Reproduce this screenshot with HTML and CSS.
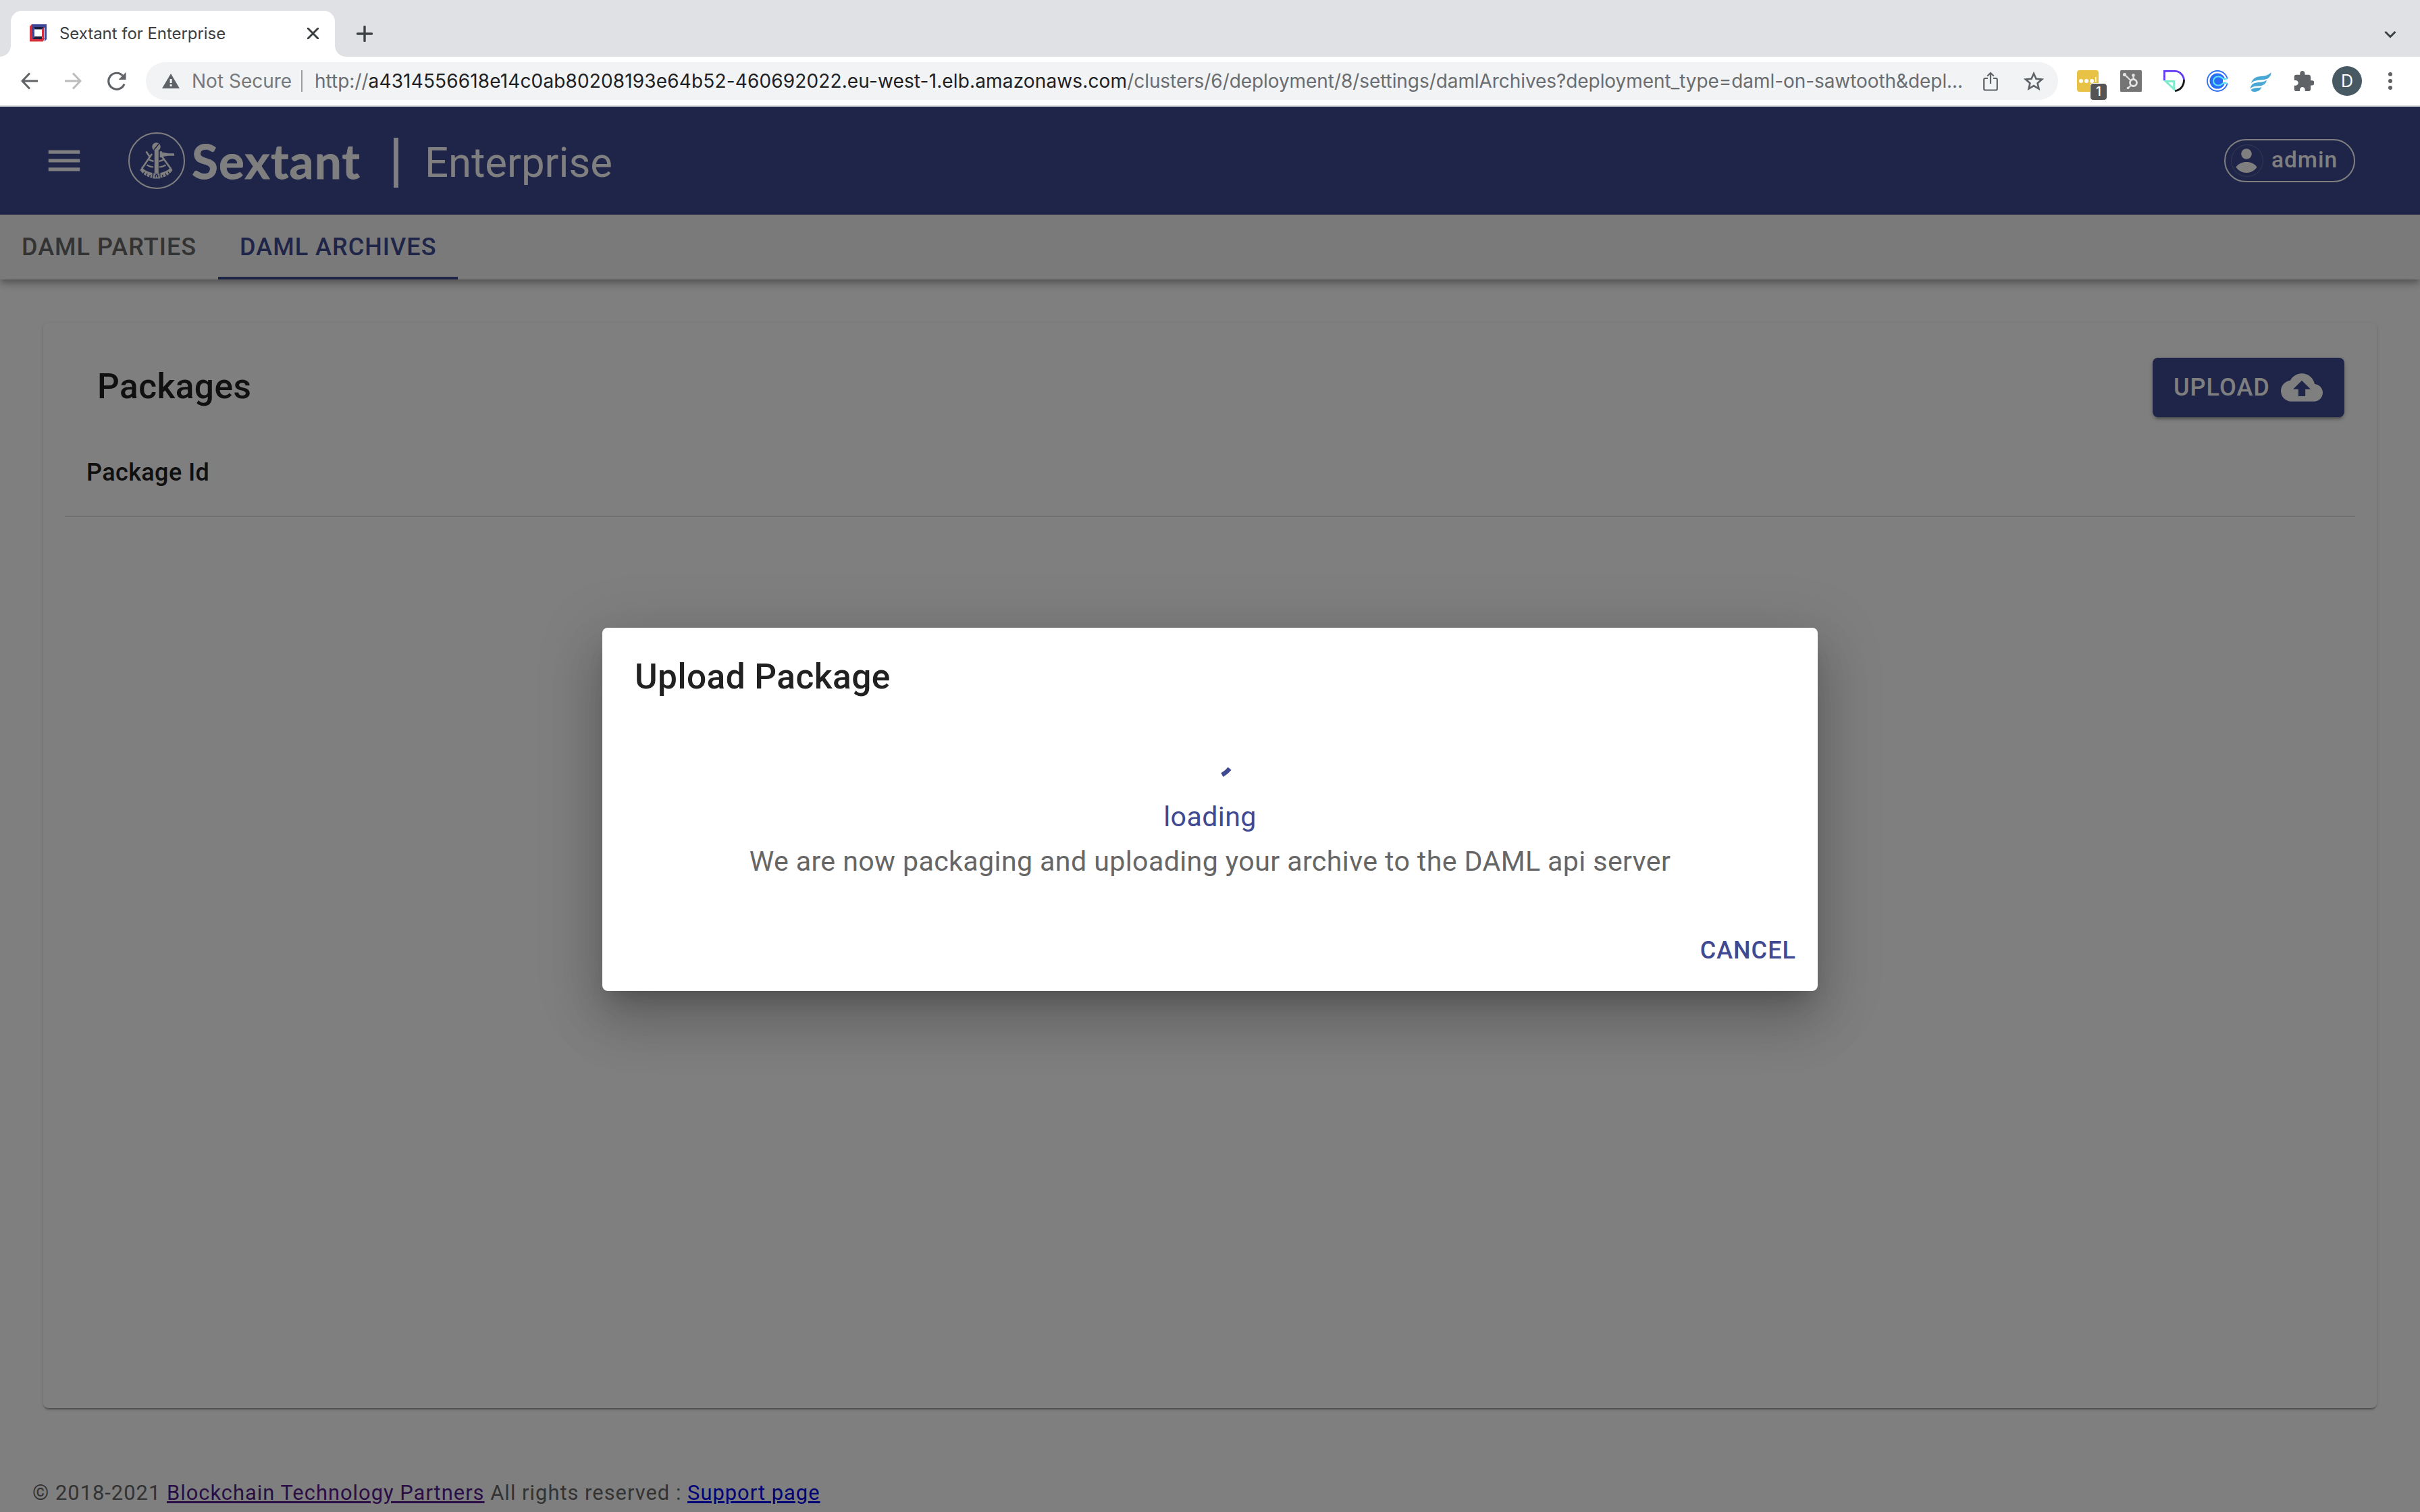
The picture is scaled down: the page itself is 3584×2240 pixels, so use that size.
FILE: index.html
```
<!DOCTYPE html>
<html lang="en">
<head>
<meta charset="utf-8">
<title>Sextant for Enterprise</title>
<link rel="stylesheet" href="styles.css">
</head>
<body>
<div class="browser">
  <div class="tabstrip">
    <div class="tab">
      <svg class="favicon" viewBox="0 0 26 26"><path fill="#d5303e" d="M0 3 3 0h6v20h13l-2 5.500H0z"/><path fill="#3d4795" d="M3 0h22v22l-3 3.500V5H9v12H3z"/><path fill="#1b1f3f" d="M6 4h15l-3 4H9zM4 22l4-4h10v4z"/><path fill="#fff" d="M7 7.500h11v10.500H7z"/><path fill="#d5303e" d="M18 8l3-4v18l-3-3z"/><path fill="#3d4795" d="M4 4l3 3v11l-3 4z"/></svg>
      <span class="tab-title">Sextant for Enterprise</span>
      <svg class="tab-close" viewBox="0 0 16 16"><path d="M1 1l14 14M15 1 1 15" stroke="#3c4043" stroke-width="2.800" stroke-linecap="round"/></svg>
    </div>
    <svg class="new-tab" viewBox="0 0 24 24"><path d="M12 1.500v21M1.500 12h21" stroke="#3c4043" stroke-width="3.400" stroke-linecap="round"/></svg>
    <svg class="tab-search" viewBox="0 0 18 12"><path d="M1.500 2 9 9.500 16.500 2" fill="none" stroke="#3c4043" stroke-width="3"/></svg>
  </div>
  <div class="toolbar">
    <svg class="nav-icon" viewBox="0 0 26 26"><path d="M25 13H2M13 1.500 2 13l11 11.500" fill="none" stroke="#5f6368" stroke-width="3"/></svg>
    <svg class="nav-icon" viewBox="0 0 26 26"><path d="M1 13h23M13 1.500 24 13 13 24.500" fill="none" stroke="#babcbe" stroke-width="3"/></svg>
    <svg class="nav-icon reload" viewBox="0 0 28 28"><path d="M25 18.500A12 12 0 1 1 22.500 6" fill="none" stroke="#5f6368" stroke-width="3.200"/><path d="M27.500 1v11h-11z" fill="#5f6368"/></svg>
    <div class="omnibox">
      <svg class="warn" viewBox="0 0 26 22"><path d="M13 0l13 22H0z" fill="#5f6368"/><path d="M11.600 8h3v6h-3zM11.600 16h3v3h-3z" fill="#f1f3f4"/></svg>
      <span class="not-secure">Not Secure</span>
      <span class="omni-sep"></span>
      <span class="url"><span class="u-scheme">http://</span><span class="u-host">a4314556618e14c0ab80208193e64b52-460692022.eu-west-1.elb.amazonaws.com</span><span class="u-path">/clusters/6/deployment/8/settings/damlArchives?deployment_type=daml-on-sawtooth&amp;depl...</span></span>
      <svg class="share" viewBox="0 0 22 29"><path d="M7 10H3.200Q1.200 10 1.200 12v13.500q0 2 2 2h15.600q2 0 2-2V12q0-2-2-2H15M11 18V2.500M6.200 6.800 11 2l4.800 4.800" fill="none" stroke="#5f6368" stroke-width="2.200"/></svg>
      <svg class="star" viewBox="0 0 30 28"><path d="M15 3l3.500 7.800 8.500.8-6.400 5.600 1.900 8.300-7.500-4.400-7.500 4.400 1.900-8.300L3 11.600l8.500-.8z" fill="none" stroke="#5f6368" stroke-width="2.600"/></svg>
    </div>
    <div class="extensions">
      <span class="ext ext-note"><svg viewBox="0 0 32 32"><rect width="32" height="32" rx="4" fill="#e8c244"/><g fill="#fff"><circle cx="6" cy="16" r="3"/><circle cx="14" cy="16" r="3"/><circle cx="22" cy="16" r="3"/><path d="M27 10h1.500v8H27z"/></g></svg><span class="ext-badge">1</span></span>
      <svg class="ext" viewBox="0 0 32 32"><rect width="32" height="32" rx="1.500" fill="#757575"/><g fill="none" stroke="#e4e4e4" stroke-width="2.200"><circle cx="19.500" cy="18.500" r="5" stroke-width="2.800"/><path d="M19.500 13V8M15.500 15 7 7M16 22.500 11.500 26.500"/></g><g fill="#e4e4e4"><circle cx="6.500" cy="6.500" r="2.600"/><circle cx="19.500" cy="7.500" r="2.300"/><circle cx="11.500" cy="26.500" r="1.800"/></g></svg>
      <svg class="ext" viewBox="0 0 32 32"><path d="M1.400 15V1.400h16A14 14 0 0 1 30.500 15" fill="none" stroke="#633bf5" stroke-width="2.900"/><path d="M30.500 14.500c0 9-6 15.500-13.500 16" fill="none" stroke="#191919" stroke-width="2.900"/><path d="M3.500 16.500h12.200V28z" fill="none" stroke="#7ceccb" stroke-width="3"/></svg>
      <svg class="ext" viewBox="0 0 32 32"><circle cx="16" cy="16" r="15" fill="none" stroke="#2a6df5" stroke-width="1.800"/><circle cx="16" cy="16" r="11.500" fill="#2a6df5"/><path d="M24 12.800h8v6.400h-8z" fill="#fff"/><path d="M30.500 12c-3 1.500-5 1.500-7 0-2-2-4-3-7-2.500a6.500 6.500 0 0 0 0 13c3 .5 5-.5 7-2.500 2-1.500 4-1.500 7 0" fill="none" stroke="#5fe0f5" stroke-width="2.200"/></svg>
      <svg class="ext" viewBox="0 0 32 32"><g fill="#49a7d6"><path d="M31.500 3c0 7-5 11-13 11.200C11 14.500 6 15.500 2 19 4 12 9 9.500 17 9 24 8.500 28 7 31.500 3z"/><path d="M25 14.500c-1 6-5 8.500-12 9-6 .2-9 .8-12.500 4C2 20 6 18.500 13 18c6-.5 9-1 12-3.500z"/><path d="M17.500 25c-2 5-6 7-11 7-3 0-4.500-1.500-5-3 3-2.500 6-2.800 10-3 2.500 0 4.500-.3 6-1z"/></g></svg>
      <svg class="ext puzzle" viewBox="1.500 1 21 21"><path fill="#5f6368" d="M20.500 11H19V7c0-1.100-.9-2-2-2h-4V3.500C13 2.120 11.880 1 10.500 1S8 2.120 8 3.500V5H4c-1.100 0-1.990.9-1.990 2v3.800H3.500c1.490 0 2.700 1.210 2.700 2.700s-1.210 2.700-2.700 2.700H2V20c0 1.100.9 2 2 2h3.800v-1.500c0-1.490 1.210-2.700 2.700-2.700s2.700 1.210 2.700 2.700V22H17c1.100 0 2-.9 2-2v-4h1.500c1.380 0 2.500-1.120 2.500-2.500S21.880 11 20.500 11z"/></svg>
      <span class="profile">D</span>
      <svg class="dots" viewBox="0 0 6 26"><g fill="#5f6368"><circle cx="3" cy="3" r="3"/><circle cx="3" cy="13" r="3"/><circle cx="3" cy="23" r="3"/></g></svg>
    </div>
  </div>
</div>

<div class="app">
  <header class="appbar">
    <svg class="menu" viewBox="0 0 24 24"><path fill="#fff" d="M3 18h18v-2H3v2zm0-5h18v-2H3v2zm0-7v2h18V6H3z"/></svg>
    <svg class="logo" viewBox="0 0 84 84">
      <circle cx="42" cy="42" r="41" fill="none" stroke="#fff" stroke-width="2"/>
      <g fill="#fff"><circle cx="41.500" cy="21.500" r="6.200"/><path d="M38.800 27h6v33h-6z"/><path d="M46.700 28.300h3.300V29.500l9 1.800h9v3.400h-9l-9 1.500v1.100h-3.300z"/><path d="M17.500 56 20 52c5 5 10 7 15.500 8v7.500C28 66.500 21 62 17.500 56z"/><path d="M65.500 56 63 52c-5 5-10 7-15.500 8v7.500C55 66.500 62 62 65.500 56z"/><path d="M37.500 60.500h8.500l1 8H36.500z"/></g>
      <g fill="none" stroke="#fff" stroke-width="2.600"><path d="M20 54 35 32M63 54 50 36M26.500 28.500l6 9" /><path d="M31 40.500c2 1.500 4 2 6.500 2.300M27.500 48.500c3 1.800 6 2.700 9.500 3M52 40.500c-2 1.500-4 2-6.500 2.300M55.500 48.500c-3 1.800-6 2.700-9.500 3" stroke-width="2.200"/></g>
      <path d="M38 26 45 17.500M22 62l2-3.500M26.500 64.500l1.500-3.500M31.500 66.500l1-3.500M61 62l-2-3.500M56.500 64.500 55 61M51.500 66.500l-1-3.500M40 67v-3.500l1.800-1 1.800 1V67" fill="none" stroke="#3f4a93" stroke-width="1.500"/>
    </svg>
    <span class="brand">Sextant</span>
    <span class="brand-sep"></span>
    <span class="edition">Enterprise</span>
    <div class="chip">
      <svg class="avatar" viewBox="0 0 48 48"><circle cx="24" cy="24" r="23.500" fill="none" stroke="#fff" stroke-opacity=".22"/><circle cx="23" cy="14" r="7.800" fill="#fff"/><path d="M7.500 33.500C11 28.500 16.500 26 23 26s12 2.500 15.500 7.500C35 39 29.500 42 23 42S11 39 7.500 33.500z" fill="#fff"/></svg>
      <span class="user">admin</span>
    </div>
  </header>
  <nav class="tabs">
    <span class="nav-tab">DAML PARTIES</span>
    <span class="nav-tab active">DAML ARCHIVES</span>
  </nav>
  <main class="content">
    <section class="card">
      <div class="card-head">
        <h2 class="heading">Packages</h2>
        <button class="upload"><span class="upload-label">UPLOAD</span><svg class="cloud" viewBox="0 0 24 24"><path fill="#fff" d="M19.350 10.040C18.670 6.590 15.640 4 12 4 9.110 4 6.600 5.640 5.350 8.040 2.340 8.360 0 10.910 0 14c0 3.310 2.690 6 6 6h13c2.760 0 5-2.240 5-5 0-2.640-2.050-4.780-4.650-4.960zM14 13v4h-4v-4H7l5-5 5 5h-3z"/></svg></button>
      </div>
      <div class="table-head">Package Id</div>
    </section>
  </main>
  <footer class="footer">© 2018-2021 <a class="visited">Blockchain Technology Partners</a> All rights reserved : <a class="link">Support page</a></footer>

  <div class="backdrop">
    <div class="dialog">
      <h2 class="dialog-title">Upload Package</h2>
      <div class="dialog-body">
        <svg class="spinner" viewBox="0 0 80 80"><path d="M66.600 64.500 71.600 68.700Q66.500 75 59.500 79L56.300 73.300Q62.500 70 66.600 64.500z" fill="#3f4a93"/></svg>
        <span class="loading">loading</span>
        <span class="message">We are now packaging and uploading your archive to the DAML api server</span>
      </div>
      <div class="dialog-actions"><span class="cancel">CANCEL</span></div>
    </div>
  </div>
</div>
</body>
</html>
```
FILE: styles.css
```
* { box-sizing: border-box; }
body { margin: 0; width: 3584px; height: 2240px; overflow: hidden; background: #fff; font-family: Roboto, "Liberation Sans", sans-serif; display: flex; flex-direction: column; }
svg { display: block; flex: none; }
h2 { margin: 0; }
span { white-space: nowrap; }

.browser { height: 158px; flex: none; background: #fff; border-bottom: 2px solid #dadce0; font-family: Inter, "Liberation Sans", sans-serif; }
.tabstrip { height: 84px; background: #dfe1e5; display: flex; align-items: center; padding: 16px 35px 0 16px; }
.tab { position: relative; width: 480px; height: 68px; background: #fff; border-radius: 16px 16px 0 0; display: flex; align-items: center; padding: 0 24px 2px 28px; }
.tab::before, .tab::after { content: ""; position: absolute; bottom: 0; width: 16px; height: 16px; }
.tab::before { left: -16px; background: radial-gradient(circle at 0 0, transparent 15.500px, #fff 16px); }
.tab::after { right: -16px; background: radial-gradient(circle at 100% 0, transparent 15.500px, #fff 16px); }
.favicon { width: 26px; height: 26px; }
.tab-title { font-size: 24px; line-height: 32px; letter-spacing: -.05px; color: #3c4043; margin: 2px 0 0 18px; flex: 1; }
.tab-close { width: 17px; height: 17px; }
.new-tab { width: 24px; height: 24px; margin-left: 32px; }
.tab-search { width: 18px; height: 12px; margin-left: auto; margin-top: 2px; }

.toolbar { height: 72px; display: flex; align-items: center; padding: 0 41px 0 31px; }
.nav-icon { width: 26px; height: 26px; margin-right: 38px; }
.reload { width: 28px; height: 28px; margin-right: 29px; }
.omnibox { width: 2832px; height: 56px; border-radius: 28px; background: #f1f3f4; display: flex; align-items: center; padding: 0 21px 0 24px; font-size: 28px; line-height: 36px; }
.warn { width: 26px; height: 22px; }
.not-secure { color: #75797d; width: 147px; margin-left: 18px; }
.omni-sep { width: 2px; height: 32px; background: #9a9da1; margin: 0 18px 0 15px; }
.url { width: 2470px; flex: none; margin-right: auto; color: #6a6d71; }
.u-host { color: #202124; letter-spacing: .14px; }
.u-path { letter-spacing: -.07px; }
.share { width: 22px; height: 29px; }
.star { width: 30px; height: 28px; margin-left: 38px; }
.extensions { flex: 1; display: flex; align-items: center; padding-left: 28px; }
.ext { width: 32px; height: 32px; margin-right: 32px; position: relative; }
.ext-badge { position: absolute; left: 19px; top: 19px; width: 26px; height: 26px; border: 1px solid #fff; border-radius: 5px; background: #545454; color: #fff; font: 500 19px/24px Inter, sans-serif; text-align: center; }
.puzzle { width: 30px; height: 30px; margin: 0 27px 0 1px; }
.profile { width: 44px; height: 44px; border-radius: 50%; background: #475962; color: #fff; font-size: 25px; line-height: 44px; text-align: center; }
.dots { width: 6px; height: 26px; margin-left: auto; }

.app { position: relative; flex: 1; display: flex; flex-direction: column; }
.appbar { height: 160px; flex: none; background: #3f4a93; color: #fff; display: flex; align-items: center; padding: 0 96px 0 64px; }
.menu { width: 62px; height: 62px; }
.logo { width: 84px; height: 84px; margin-left: 64px; }
.brand { font: 700 71px/84px Lato, sans-serif; letter-spacing: 1.200px; -webkit-text-stroke: .8px #fff; width: 298px; padding-left: 10px; }
.brand-sep { width: 7px; height: 74px; background: #fff; margin-left: 11px; margin-top: 6px; }
.edition { font-size: 61.710px; line-height: 80px; margin-left: 39px; margin-top: 5px; }
.chip { margin-left: auto; width: 194px; height: 64px; border: 2px solid #fff; border-radius: 32px; display: flex; align-items: center; padding-left: 8px; }
.avatar { width: 48px; height: 48px; }
.user { font-size: 33.430px; font-weight: 500; line-height: 40px; letter-spacing: 1px; margin: -2px 0 0 12px; }
.tabs { height: 96px; flex: none; background: #f5f5f5; display: flex; box-shadow: 0 4px 8px -2px rgba(0,0,0,.2), 0 8px 10px 0 rgba(0,0,0,.14), 0 2px 20px 0 rgba(0,0,0,.12); clip-path: inset(0 0 -50px 0); }
.nav-tab { padding: 26px 32px 0; height: 96px; font-size: 36px; font-weight: 500; line-height: 44px; letter-spacing: .02857em; color: #666; }
.nav-tab.active { color: #3f4a93; border-bottom: 4px solid #3f4a93; }
.content { padding: 64px 64px 0; }
.card { height: 1608px; border-radius: 8px; background: #fff; padding: 52px 32px 0; box-shadow: 0 4px 2px -2px rgba(0,0,0,.2), 0 2px 2px 0 rgba(0,0,0,.14), 0 2px 6px 0 rgba(0,0,0,.12); }
.card-head { height: 88px; display: flex; justify-content: space-between; align-items: center; padding: 0 16px 0 48px; }
.heading { font-size: 51.430px; font-weight: 500; line-height: 82px; letter-spacing: .0085em; color: #212121; margin-top: -3px; }
.upload { width: 284px; height: 88px; border: 0; border-radius: 8px; background: #3f4a93; color: #fff; padding: 0 32px 0 31px; display: flex; align-items: center; justify-content: space-between; font: 500 36px/63px Roboto, sans-serif; letter-spacing: .02857em; box-shadow: 0 6px 2px -4px rgba(0,0,0,.2), 0 4px 4px 0 rgba(0,0,0,.14), 0 2px 10px 0 rgba(0,0,0,.12); }
.cloud { width: 62px; height: 62px; }
.table-head { height: 148px; border-bottom: 2px solid #e0e0e0; padding: 60px 32px 0; font-size: 36px; font-weight: 500; line-height: 44px; letter-spacing: .01071em; color: #212121; }
.footer { margin-top: 103px; padding-left: 48px; font-size: 30.860px; line-height: 46px; letter-spacing: 1.010px; color: #666; white-space: nowrap; }
.visited { color: #551a8b; text-decoration: underline; }
.link { color: #0000ee; text-decoration: underline; }

.backdrop { position: absolute; inset: 0; background: rgba(0,0,0,.5); display: flex; align-items: center; justify-content: center; }
.dialog { width: 1800px; height: 538px; border-radius: 8px; background: #fff; display: flex; flex-direction: column; box-shadow: 0 22px 30px -14px rgba(0,0,0,.2), 0 48px 76px 6px rgba(0,0,0,.14), 0 18px 92px 16px rgba(0,0,0,.12); }
.dialog-title { padding: 32px 48px; font-size: 51.430px; font-weight: 500; line-height: 82px; letter-spacing: .0085em; color: #212121; }
.dialog-body { display: flex; flex-direction: column; align-items: center; }
.spinner { width: 80px; height: 80px; margin-top: -4px; }
.loading { font-size: 41.140px; line-height: 62px; letter-spacing: .00938em; color: #3f4a93; margin-top: 27px; }
.message { font-size: 41.140px; line-height: 62px; letter-spacing: .00938em; color: #666; margin-top: 4px; }
.dialog-actions { margin-top: auto; padding: 0 32px 38px; display: flex; justify-content: flex-end; }
.cancel { font-size: 36px; font-weight: 500; line-height: 44px; letter-spacing: .02857em; color: #3f4a93; }
```
